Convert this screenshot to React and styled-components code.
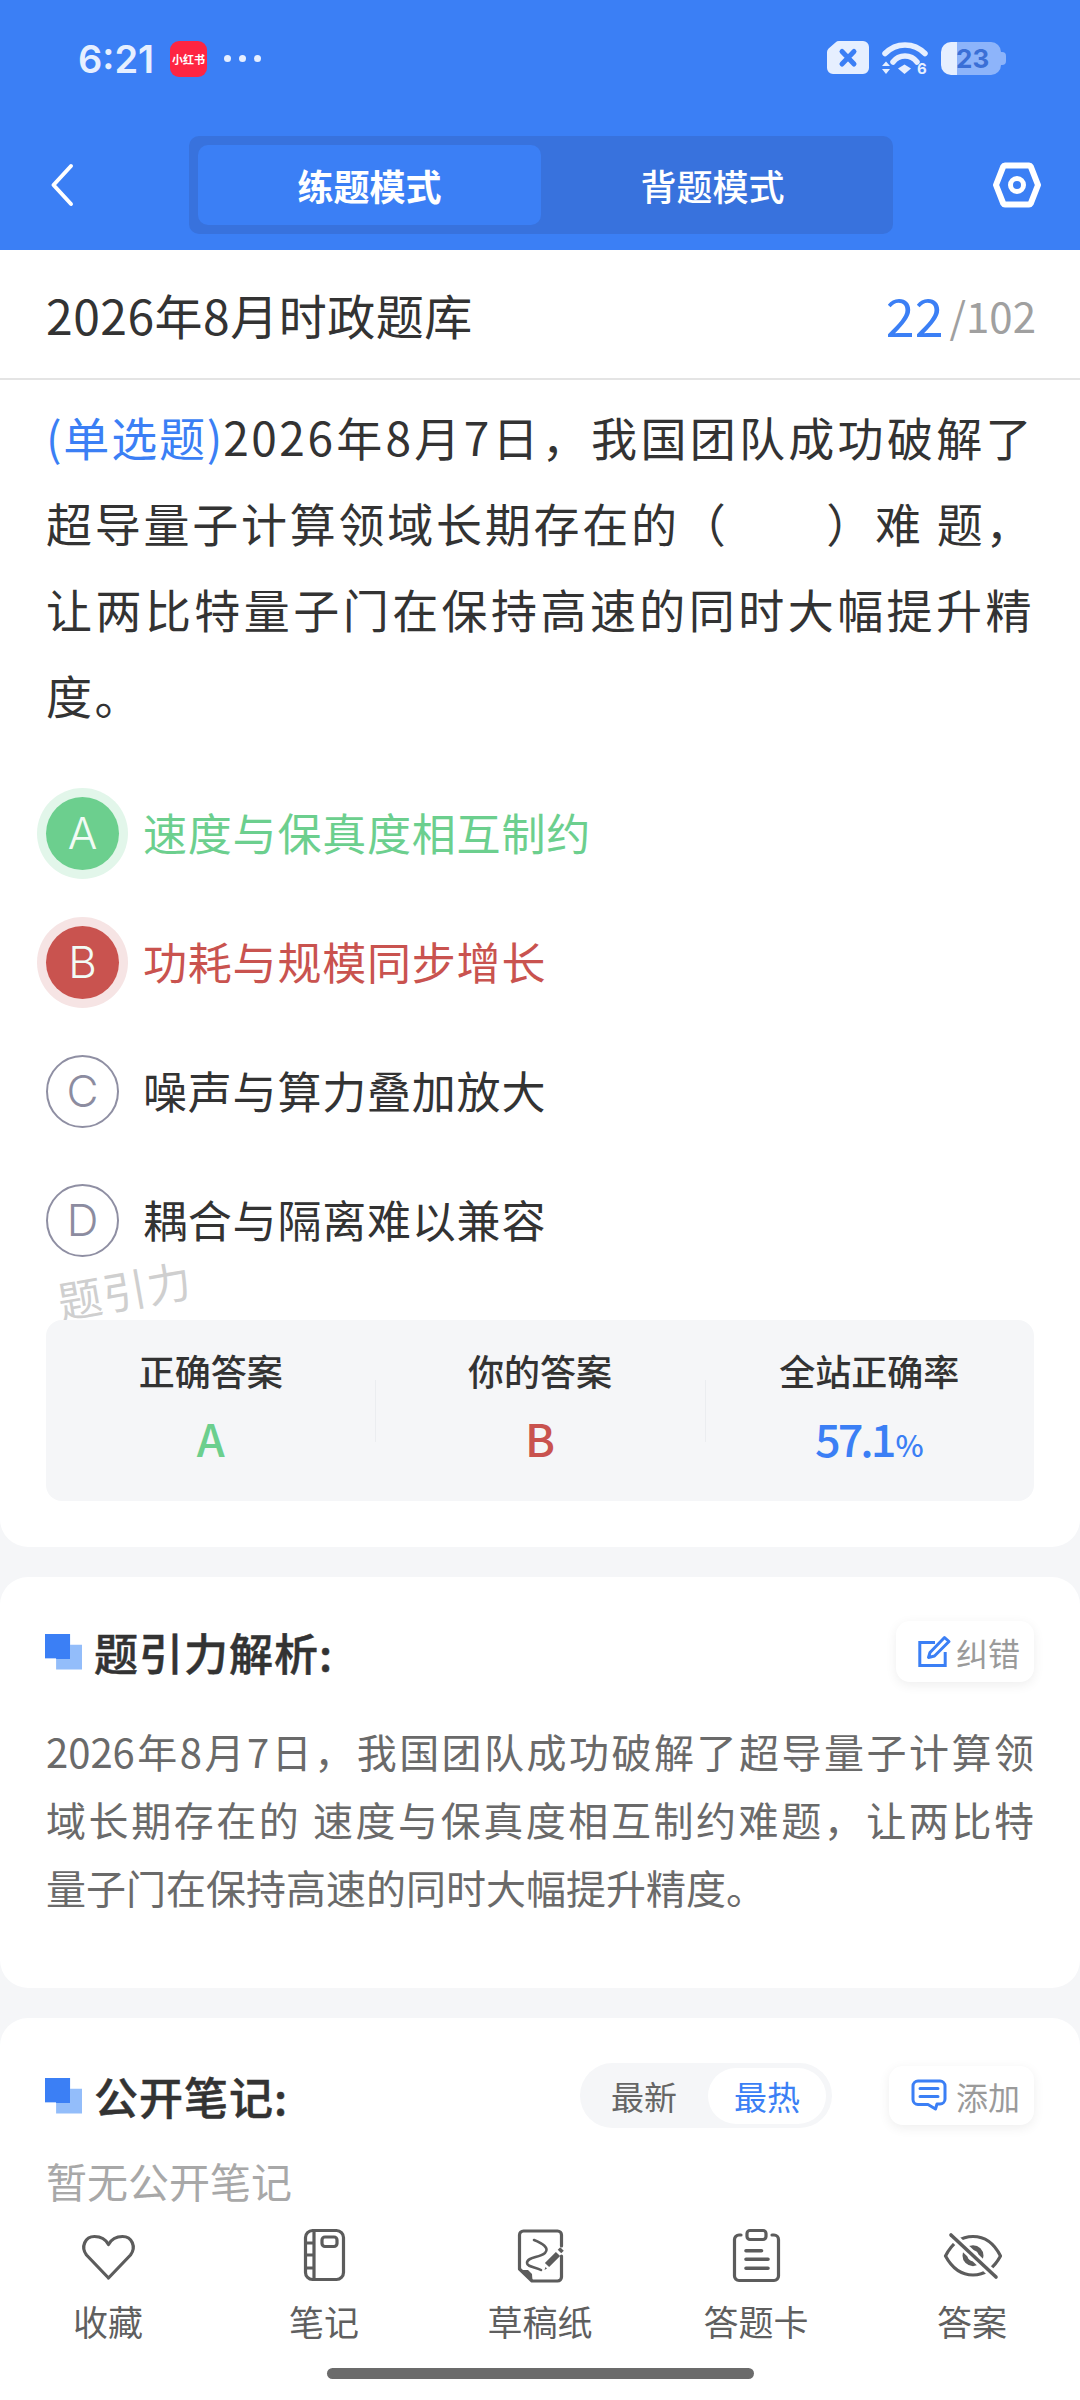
import React from "react";
import styled, { createGlobalStyle } from "styled-components";

const BLUE = "#3b7ff5";
const GREEN = "#6ccf8e";
const RED = "#c9534f";
const INK = "#5c5c5c";

const Global = createGlobalStyle`
  html, body { margin: 0; padding: 0; background: #f5f6f8; }
  body { font-family: "Noto Sans CJK SC", "Noto Sans", sans-serif; color: #333; }
  * { box-sizing: border-box; }
`;

const Page = styled.div`
  width: 1080px;
  height: 2400px;
  display: flex;
  flex-direction: column;
  overflow: hidden;
  background: #f5f6f8;
`;
const Header = styled.header`
  height: 250px;
  flex: none;
  background: ${BLUE};
  display: flex;
  flex-direction: column;
`;
const StatusBar = styled.div`
  height: 136px;
  padding: 41px 79px 0 78px;
  display: flex;
  align-items: flex-start;
`;
const Clock = styled.span`
  width: 92px;
  height: 36px;
  font-family: Inter, sans-serif;
  font-size: 38px;
  font-weight: 600;
  line-height: 36px;
  color: #e6efff;
`;
const AppBadge = styled.span`
  width: 37px;
  height: 36px;
  border-radius: 9px;
  background: #fe2542;
  color: #fff;
  font-size: 11px;
  font-weight: 700;
  line-height: 36px;
  text-align: center;
  white-space: nowrap;
`;
const Dots = styled.span`
  margin: 14px 0 0 17px;
  display: flex;
  gap: 8px;
`;
const Dot = styled.i`
  width: 7px;
  height: 7px;
  border-radius: 50%;
  background: #e6efff;
`;
const StatusRight = styled.div`
  margin-left: auto;
  display: flex;
  align-items: flex-start;
  gap: 12px;
`;
const Battery = styled.span`
  position: relative;
  width: 60px;
  height: 33px;
  margin-top: 1px;
  border-radius: 10px;
  background: linear-gradient(90deg, #e6efff 16px, #8db4fa 16px);
  color: #3a6fd6;
  font-family: Inter, sans-serif;
  font-size: 26px;
  font-weight: 700;
  line-height: 33px;
  padding-left: 15px;
  &::after {
    content: "";
    position: absolute;
    right: -5px;
    top: 10px;
    width: 5px;
    height: 13px;
    border-radius: 0 4px 4px 0;
    background: #8db4fa;
  }
`;
const NavBar = styled.div`
  height: 98px;
  display: flex;
  align-items: center;
  padding: 0 38px 0 50px;
`;
const ModeTabs = styled.div`
  width: 704px;
  height: 98px;
  margin-left: 115px;
  margin-right: auto;
  padding: 9px 9px;
  display: flex;
  background: #3872dd;
  border-radius: 10px;
`;
const ModeTab = styled.div`
  flex: 1;
  border-radius: 10px;
  background: ${(p) => (p.$active ? BLUE : "transparent")};
  color: #fff;
  font-size: 36px;
  font-weight: ${(p) => (p.$active ? 600 : 500)};
  display: flex;
  align-items: center;
  justify-content: center;
`;
const Scroll = styled.main`
  flex: 1;
  min-height: 0;
  overflow: hidden;
  display: flex;
  flex-direction: column;
  gap: 30px;
`;
const QuestionCard = styled.section`
  position: relative;
  flex: none;
  background: #fff;
  border-radius: 0 0 28px 28px;
  padding-bottom: 46px;
`;
const TitleRow = styled.div`
  height: 130px;
  padding: 0 44px 0 46px;
  border-bottom: 2px solid #e4e4e4;
  display: flex;
  align-items: center;
  justify-content: space-between;
`;
const BankTitle = styled.h1`
  margin: 0;
  font-size: 48px;
  font-weight: 400;
  letter-spacing: 0.5px;
  color: #333;
`;
const Progress = styled.div`
  display: flex;
  align-items: center;
  color: #a0a0a0;
  font-size: 42px;
`;
const Current = styled.span`
  color: ${BLUE};
  font-size: 52px;
  margin-right: 6px;
`;
const Question = styled.div`
  padding: 13px 46px 0;
  font-size: 46px;
  line-height: 86px;
  letter-spacing: 2.5px;
  color: #333;
`;
const QLine = styled.span`
  display: block;
  text-align: ${(p) => (p.$last ? "left" : "justify")};
  text-align-last: ${(p) => (p.$last ? "left" : "justify")};
  white-space: nowrap;
`;
const QType = styled.span`
  color: ${BLUE};
  letter-spacing: 1px;
`;
const Options = styled.div`
  margin-top: 30px;
  padding: 0 46px;
`;
const Option = styled.div`
  height: 129px;
  display: flex;
  align-items: center;
  gap: 24px;
  font-size: 44px;
  letter-spacing: 0.8px;
  color: ${(p) => (p.$state === "right" ? GREEN : p.$state === "wrong" ? RED : "#333")};
`;
const Mark = styled.span`
  width: 73px;
  height: 73px;
  flex: none;
  margin-top: 3px;
  border-radius: 50%;
  display: flex;
  align-items: center;
  justify-content: center;
  font-family: Inter, sans-serif;
  font-size: 44px;
  font-weight: 300;
  letter-spacing: 0;
  color: ${(p) => (p.$state ? "#f2fbf5" : "#8c8ca0")};
  background: ${(p) => (p.$state === "right" ? GREEN : p.$state === "wrong" ? RED : "#fff")};
  border: ${(p) => (p.$state ? "none" : "2px solid #8f8fa3")};
  box-shadow: ${(p) =>
    p.$state === "right"
      ? "0 0 0 9px #e2f6ea"
      : p.$state === "wrong"
        ? "0 0 0 9px #f6e4e4"
        : "none"};
`;
const Watermark = styled.span`
  position: absolute;
  left: 57px;
  top: 1007px;
  font-size: 44px;
  color: #cfcfcf;
  transform: rotate(-10deg);
  letter-spacing: 1px;
`;
const Stats = styled.div`
  margin: 37px 46px 0;
  height: 181px;
  border-radius: 16px;
  background: #f5f6f8;
  display: grid;
  grid-template-columns: repeat(3, 1fr);
  position: relative;
`;
const Stat = styled.div`
  position: relative;
  display: flex;
  flex-direction: column;
  align-items: center;
  padding-top: 25px;
  & + &::before {
    content: "";
    position: absolute;
    left: 0;
    top: 60px;
    height: 62px;
    width: 1px;
    background: #ebedf0;
  }
`;
const StatLabel = styled.span`
  font-size: 36px;
  font-weight: 500;
  line-height: 50px;
  color: #333;
`;
const StatValue = styled.span`
  margin-top: 16px;
  font-size: 45px;
  font-weight: 500;
  line-height: 54px;
  letter-spacing: ${(p) => p.$track || 0}px;
  color: ${(p) => p.$color};
`;
const Percent = styled.span`
  font-size: 30px;
  letter-spacing: 0;
  margin-left: 2px;
`;
const Card = styled.section`
  flex: ${(p) => (p.$fill ? "1" : "none")};
  background: #fff;
  border-radius: ${(p) => (p.$fill ? "28px 28px 0 0" : "28px")};
  padding: ${(p) => p.$top}px 46px ${(p) => p.$bottom}px;
`;
const SectionHead = styled.div`
  display: flex;
  align-items: center;
`;
const Squares = styled.span`
  position: relative;
  width: 37px;
  height: 36px;
  flex: none;
  margin: 0 12px 0 -1px;
  background: #93bdfa;
  clip-path: polygon(0 0, 68% 0, 68% 31%, 100% 31%, 100% 100%, 30% 100%, 30% 69%, 0 69%);
  &::before {
    content: "";
    position: absolute;
    left: 0;
    top: 0;
    width: 25px;
    height: 25px;
    background: ${BLUE};
  }
`;
const SectionTitle = styled.h2`
  margin: 0;
  flex: 1;
  font-size: 44px;
  font-weight: 500;
  -webkit-text-stroke: 0.5px #333;
  letter-spacing: 1px;
  line-height: 60px;
  color: #333;
`;
const ChipButton = styled.div`
  width: ${(p) => p.$w}px;
  height: ${(p) => p.$h}px;
  flex: none;
  border-radius: 14px;
  background: #fff;
  box-shadow: 0 3px 12px rgba(0, 0, 0, 0.07);
  padding-right: 14px;
  display: flex;
  align-items: center;
  justify-content: flex-end;
  gap: ${(p) => p.$gap}px;
  font-size: 32px;
  color: #9a9a9a;
`;
const Analysis = styled.p`
  margin: 35px 0 0;
  font-size: 40px;
  line-height: 68px;
  color: #6a6a6a;
`;
const ALine = styled.span`
  display: block;
  white-space: nowrap;
  text-align: ${(p) => (p.$last ? "left" : "justify")};
  text-align-last: ${(p) => (p.$last ? "left" : "justify")};
`;
const Segment = styled.div`
  width: 252px;
  height: 65px;
  margin-right: 57px;
  padding: 5px 6px 4px 0;
  border-radius: 33px;
  background: #f5f6f8;
  display: flex;
  font-size: 33px;
`;
const SegItem = styled.span`
  flex: ${(p) => (p.$on ? "0 0 118px" : "1")};
  border-radius: 28px;
  background: ${(p) => (p.$on ? "#fff" : "transparent")};
  color: ${(p) => (p.$on ? BLUE : "#666")};
  display: flex;
  align-items: center;
  justify-content: center;
`;
const Empty = styled.p`
  margin: 27px 0 0;
  font-size: 41px;
  line-height: 50px;
  color: #a8a8a8;
`;
const TabBar = styled.nav`
  height: 188px;
  flex: none;
  background: #fff;
  padding-top: 14px;
  display: flex;
  flex-direction: column;
  align-items: center;
`;
const TabRow = styled.div`
  width: 100%;
  display: grid;
  grid-template-columns: repeat(5, 216px);
`;
const TabItem = styled.div`
  display: flex;
  flex-direction: column;
  align-items: center;
  gap: 13px;
  font-size: 35px;
  line-height: 44px;
  color: #5f5f5f;
`;
const HomeBar = styled.div`
  width: 427px;
  height: 11px;
  margin-top: 25px;
  border-radius: 6px;
  background: #6b6b6b;
`;

const Sim = () => (
  <svg width="42" height="34" viewBox="0 0 42 34">
    <path d="M12 0H36a6 6 0 0 1 6 6V27a6 6 0 0 1-6 6H6a6 6 0 0 1-6-6V11a5 5 0 0 1 1.6-3.6L8.5 1.4A5 5 0 0 1 12 0Z" fill="#e6efff" />
    <path d="M15 10.5 27 23M27 10.5 15 23" stroke={BLUE} strokeWidth="5" strokeLinecap="round" />
  </svg>
);
const Wifi = () => (
  <svg width="48" height="38" viewBox="0 0 48 38">
    <g fill="none" stroke="#e6efff" strokeWidth="5.5" strokeLinecap="round">
      <path d="M4 12.5C15 1 33 1 44 12.5" />
      <path d="M12 21C18 13 30 13 36 21" />
    </g>
    <path d="M23.5 23.5 30 27.5 23.5 33 17 27.5Z" fill="#e6efff" />
    <path d="M5 20.5 9 25H1ZM5 33 1 28H9Z" fill="#e6efff" />
    <text x="36" y="33" fontFamily="Inter, sans-serif" fontSize="15" fontWeight="700" fill="#e6efff">6</text>
  </svg>
);
const Back = () => (
  <svg width="24" height="44" viewBox="0 0 24 44">
    <path d="M21 3 3.5 22 21 41" fill="none" stroke="#fff" strokeWidth="4" strokeLinecap="round" strokeLinejoin="round" />
  </svg>
);
const Nut = () => (
  <svg width="50" height="46" viewBox="0 0 50 46">
    <path d="M13 3.5H37a2 2 0 0 1 1.8 1.1L46 23 38.8 41.4A2 2 0 0 1 37 42.5H13a2 2 0 0 1-1.8-1.1L4 23l7.2-18.4A2 2 0 0 1 13 3.5Z" fill="none" stroke="#fff" strokeWidth="6" strokeLinejoin="round" />
    <circle cx="25" cy="23" r="6.5" fill="none" stroke="#fff" strokeWidth="5" />
  </svg>
);
const EditIcon = () => (
  <svg width="36" height="36" viewBox="0 0 36 36" fill="none" stroke={BLUE} strokeWidth="3">
    <path d="M18 8.5H2.8V31.5H28.2V18" />
    <path d="M11.5 23.5 13 18.5 27.5 3.5 32 7.5 17.5 22Z" strokeLinejoin="round" />
  </svg>
);
const NoteIcon = () => (
  <svg width="36" height="36" viewBox="0 0 36 36" fill="none" stroke={BLUE} strokeWidth="3">
    <path d="M7 3H29a5 5 0 0 1 5 5V21a5 5 0 0 1-5 5H26L24.500 31 17 26.500H7a5 5 0 0 1-5-5V8A5 5 0 0 1 7 3Z" strokeLinejoin="round" />
    <path d="M9 10.500H27M9 18.500H27" strokeLinecap="round" />
  </svg>
);
const Heart = () => (
  <svg width="60" height="60" viewBox="0 0 60 60" fill="none" stroke={INK} strokeWidth="3.2" strokeLinejoin="round">
    <path d="M30.500 52 8.500 29C2.500 21 7 10.500 16.500 10.500 22 10.500 27.500 13 30.500 18.500 33.500 13 39 10.500 44.500 10.500 54 10.500 58.500 21 52.500 29Z" />
  </svg>
);
const Notebook = () => (
  <svg width="60" height="60" viewBox="0 0 60 60" fill="none" stroke={INK} strokeWidth="3.200">
    <rect x="11.500" y="4.500" width="38" height="49" rx="7" />
    <path d="M20 4.500V53.500M11.500 17H20M11.500 29H20M11.500 42H20" />
    <rect x="28" y="11" width="15" height="9.500" rx="3" />
  </svg>
);
const Draft = () => (
  <svg width="60" height="60" viewBox="0 0 60 60" fill="none" stroke={INK} strokeWidth="3.200" strokeLinecap="round">
    <path d="M51.500 20V9a4 4 0 0 0-4-4H13.500a4 4 0 0 0-4 4V43L22 55H47.500a4 4 0 0 0 4-4V30" strokeLinejoin="round" />
    <path d="M10 44H18L22 48 22.500 55Z" fill={INK} stroke="none" />
    <path d="M24 14C32 17 40 22 35 27 29 32 17 31 17 37 17 41 26 41 31 44" strokeWidth="2.600" />
    <path d="M37 39 48 28" strokeWidth="6" strokeLinecap="butt" />
    <path d="M34.500 44 35.500 41 37 42.500Z" fill={INK} stroke="none" />
    <path d="M49.500 25.500 52 23" strokeWidth="5" strokeLinecap="butt" />
  </svg>
);
const Clipboard = () => (
  <svg width="60" height="60" viewBox="0 0 60 60" fill="none" stroke={INK} strokeWidth="3.200" strokeLinecap="round">
    <path d="M15 9H13a4.500 4.500 0 0 0-4.500 4.500V50a4.500 4.500 0 0 0 4.500 4.500H48a4.500 4.500 0 0 0 4.500-4.500V13.500A4.500 4.500 0 0 0 48 9H46" />
    <rect x="21" y="4.500" width="19" height="9" rx="3" />
    <path d="M20 24.700H35.500M20 33.300H42M20 42.300H42" strokeWidth="3.600" />
  </svg>
);
const EyeOff = () => (
  <svg width="60" height="60" viewBox="0 0 60 60" fill="none" stroke={INK} strokeWidth="3.200">
    <path d="M3.500 30C10 17 20 10.500 31 10.500S52 17 58.500 30C52 42 42 49 31 49S10 42 3.500 30Z" strokeLinejoin="round" />
    <circle cx="31" cy="29.700" r="8" strokeWidth="5" />
    <path d="M9 9 54 51" stroke="#fff" strokeWidth="9" />
    <path d="M9 9 54 51" strokeWidth="3.600" strokeLinecap="round" />
  </svg>
);

const optionData = [
  ["A", "速度与保真度相互制约", "right"],
  ["B", "功耗与规模同步增长", "wrong"],
  ["C", "噪声与算力叠加放大"],
  ["D", "耦合与隔离难以兼容"],
];
const tabs = [
  [Heart, "收藏"],
  [Notebook, "笔记"],
  [Draft, "草稿纸"],
  [Clipboard, "答题卡"],
  [EyeOff, "答案"],
];

export default function App() {
  return (
    <Page>
      <Global />
      <Header>
        <StatusBar>
          <Clock>6:21</Clock>
          <AppBadge>小红书</AppBadge>
          <Dots><Dot /><Dot /><Dot /></Dots>
          <StatusRight>
            <Sim />
            <Wifi />
            <Battery>23</Battery>
          </StatusRight>
        </StatusBar>
        <NavBar>
          <Back />
          <ModeTabs>
            <ModeTab $active>练题模式</ModeTab>
            <ModeTab>背题模式</ModeTab>
          </ModeTabs>
          <Nut />
        </NavBar>
      </Header>
      <Scroll>
        <QuestionCard>
          <TitleRow>
            <BankTitle>2026年8月时政题库</BankTitle>
            <Progress><Current>22</Current>/102</Progress>
          </TitleRow>
          <Question>
            <QLine><QType>(单选题)</QType>2026年8月7日，我国团队成功破解了</QLine>
            <QLine>超导量子计算领域长期存在的（　　）难 题，</QLine>
            <QLine>让两比特量子门在保持高速的同时大幅提升精</QLine>
            <QLine $last>度。</QLine>
          </Question>
          <Options>
            {optionData.map(([k, t, s]) => (
              <Option key={k} $state={s}>
                <Mark $state={s}>{k}</Mark>
                {t}
              </Option>
            ))}
          </Options>
          <Watermark>题引力</Watermark>
          <Stats>
            <Stat><StatLabel>正确答案</StatLabel><StatValue $color={GREEN}>A</StatValue></Stat>
            <Stat><StatLabel>你的答案</StatLabel><StatValue $color={RED}>B</StatValue></Stat>
            <Stat><StatLabel>全站正确率</StatLabel><StatValue $color={BLUE} $track={-3}>57.1<Percent>%</Percent></StatValue></Stat>
          </Stats>
        </QuestionCard>
        <Card $top={44} $bottom={67}>
          <SectionHead>
            <Squares />
            <SectionTitle>题引力解析:</SectionTitle>
            <ChipButton $w={138} $h={61} $gap={3}><EditIcon />纠错</ChipButton>
          </SectionHead>
          <Analysis>
            <ALine>2026年8月7日，我国团队成功破解了超导量子计算领</ALine>
            <ALine>域长期存在的 速度与保真度相互制约难题，让两比特</ALine>
            <ALine $last>量子门在保持高速的同时大幅提升精度。</ALine>
          </Analysis>
        </Card>
        <Card $fill $top={45} $bottom={0}>
          <SectionHead>
            <Squares />
            <SectionTitle>公开笔记:</SectionTitle>
            <Segment>
              <SegItem>最新</SegItem>
              <SegItem $on>最热</SegItem>
            </Segment>
            <ChipButton $w={145} $h={59} $gap={9}><NoteIcon />添加</ChipButton>
          </SectionHead>
          <Empty>暂无公开笔记</Empty>
        </Card>
      </Scroll>
      <TabBar>
        <TabRow>
          {tabs.map(([Icon, label]) => (
            <TabItem key={label}>
              <Icon />
              {label}
            </TabItem>
          ))}
        </TabRow>
        <HomeBar />
      </TabBar>
    </Page>
  );
}
